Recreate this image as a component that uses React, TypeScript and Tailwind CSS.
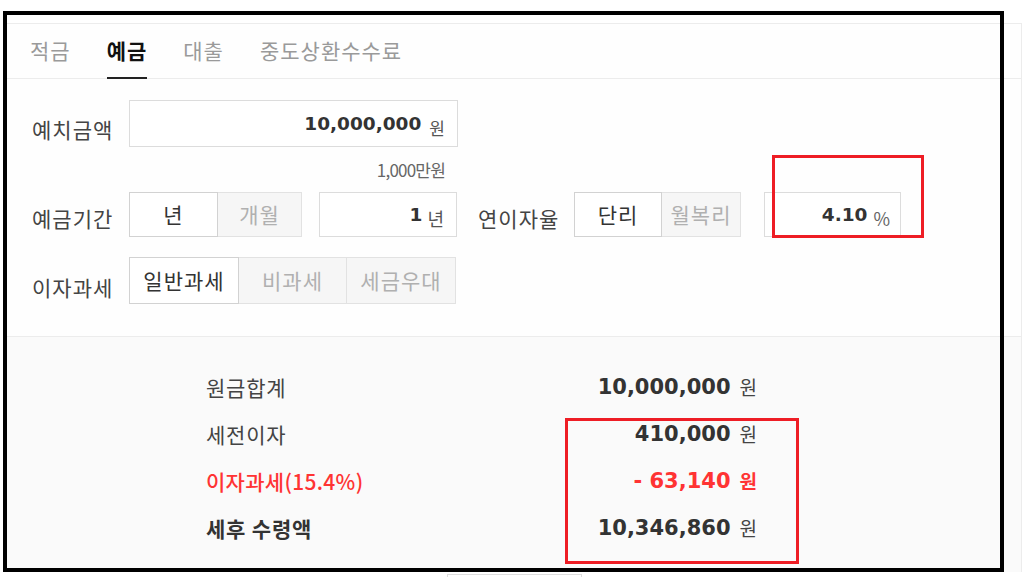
import React from "react";

const tabs = ["적금", "예금", "대출", "중도상환수수료"];

function Toggle({ items, widths }: { items: string[]; widths: string[] }) {
  return (
    <div className="flex h-full">
      {items.map((label, i) => (
        <div
          key={label}
          className={
            i === 0
              ? `${widths[i]} flex h-full items-center justify-center border border-[#d2d2d2] bg-white text-[#333]`
              : `${widths[i]} flex h-full items-center justify-center border border-l-0 border-[#e2e2e2] bg-[#f6f6f6] text-[#b0b0b0]`
          }
        >
          {label}
        </div>
      ))}
    </div>
  );
}

function Row({
  label,
  value,
  red,
  strong,
}: {
  label: string;
  value: string;
  red?: boolean;
  strong?: boolean;
}) {
  return (
    <div className="ml-[201px] flex h-[47px] w-[551px] items-center justify-between">
      <span
        className={
          red
            ? "text-[21px] font-medium tracking-[0.3px] text-[#ff3333]"
            : strong
            ? "text-[21px] font-bold tracking-[0.8px] text-[#333]"
            : "text-[21px] tracking-[0.8px] text-[#444]"
        }
      >
        {label}
      </span>
      <span className="flex items-center">
        <span
          className={
            red
              ? "font-['DejaVu_Sans',sans-serif] text-[21px] font-bold text-[#ff3333]"
              : "font-['DejaVu_Sans',sans-serif] text-[21px] font-bold text-[#333]"
          }
        >
          {value}
        </span>
        <span
          className={
            red
              ? "ml-[9px] text-[19px] font-bold text-[#ff3333]"
              : "ml-[9px] text-[19px] text-[#444]"
          }
        >
          원
        </span>
      </span>
    </div>
  );
}

export default function App() {
  return (
    <div className="relative h-[577px] w-[1024px] overflow-hidden bg-white font-['Noto_Sans_CJK_KR','Noto_Sans',sans-serif] text-[#333]">
      <div className="ml-[5px] mt-[23px] w-[1017px] border-r border-t border-[#ececec] bg-[#fefefe]">
        {/* tabs */}
        <div className="flex h-[55px] gap-[36px] border-b border-[#ececec] pl-[25px] text-[21px] tracking-[1px]">
          {tabs.map((t) => (
            <div
              key={t}
              className={
                t === "예금"
                  ? "-mb-px flex items-center border-b-2 border-[#222] font-bold text-[#111]"
                  : "-mb-px flex items-center border-b-2 border-transparent text-[#9a9a9a]"
              }
            >
              {t}
            </div>
          ))}
        </div>

        {/* form */}
        <div className="border-b border-[#ececec] pb-[32px] pl-[27px] pt-[21px] text-[21px] tracking-[1px]">
          <div className="flex h-[47px] items-start">
            <div className="w-[97px] pt-[6px] leading-[47px] text-[#444]">예치금액</div>
            <div className="flex h-[47px] w-[329px] items-center justify-end border border-[#dcdcdc] bg-white pr-[12px] tracking-normal">
              <span className="font-['DejaVu_Sans',sans-serif] text-[18.5px] font-bold text-[#333]">10,000,000</span>
              <span className="ml-[8px] translate-y-[4px] text-[17px] text-[#555]">원</span>
            </div>
          </div>
          <div className="flex h-[45px] w-[426px] items-center justify-end pr-[13px] text-[17px] tracking-[-0.8px] text-[#666]">
            1,000만원
          </div>
          <div className="flex h-[45px] items-start">
            <div className="w-[97px] pt-[4px] leading-[45px] text-[#444]">예금기간</div>
            <div className="h-[45px]">
              <Toggle items={["년", "개월"]} widths={["w-[89px]", "w-[84px]"]} />
            </div>
            <div className="ml-[17px] flex h-[45px] w-[138px] items-center justify-end border border-[#dcdcdc] bg-white pr-[12px] tracking-normal">
              <span className="font-['DejaVu_Sans',sans-serif] text-[18.5px] font-bold text-[#333]">1</span>
              <span className="ml-[5px] translate-y-[4px] text-[18px] text-[#555]">년</span>
            </div>
            <div className="ml-[21px] w-[96px] pt-[4px] leading-[45px] text-[#444]">연이자율</div>
            <div className="h-[45px]">
              <Toggle items={["단리", "월복리"]} widths={["w-[88px]", "w-[79px]"]} />
            </div>
            <div className="ml-[23px] flex h-[45px] w-[137px] items-center justify-end border border-[#dcdcdc] bg-white pr-[10px] tracking-normal">
              <span className="font-['DejaVu_Sans',sans-serif] text-[18.5px] font-bold text-[#333]">4.10</span>
              <span className="ml-[6px] translate-y-[4px] text-[18px] text-[#666]">%</span>
            </div>
          </div>
          <div className="mt-[20px] flex h-[47px] items-start">
            <div className="w-[97px] pt-[7px] leading-[47px] text-[#444]">이자과세</div>
            <div className="h-[47px]">
              <Toggle items={["일반과세", "비과세", "세금우대"]} widths={["w-[110px]", "w-[108px]", "w-[109px]"]} />
            </div>
          </div>
        </div>

        {/* summary */}
        <div className="h-[235px] bg-[#fafafa] pt-[27px]">
          <Row label="원금합계" value="10,000,000" />
          <Row label="세전이자" value="410,000" />
          <Row label="이자과세(15.4%)" value="- 63,140" red />
          <Row label="세후 수령액" value="10,346,860" strong />
        </div>
      </div>
      <div className="ml-[447px] mt-[2px] h-[20px] w-[135px] border border-[#dddddd] bg-white" />

      {/* annotation frames */}
      <div className="absolute left-[3px] top-[11px] h-[561px] w-[1001px] border-4 border-black" />
      <div className="absolute left-[772px] top-[155px] h-[83px] w-[152px] border-[3px] border-[#ee1d25]" />
      <div className="absolute left-[565px] top-[418px] h-[146px] w-[234px] border-[3px] border-[#ee1d25]" />
    </div>
  );
}
